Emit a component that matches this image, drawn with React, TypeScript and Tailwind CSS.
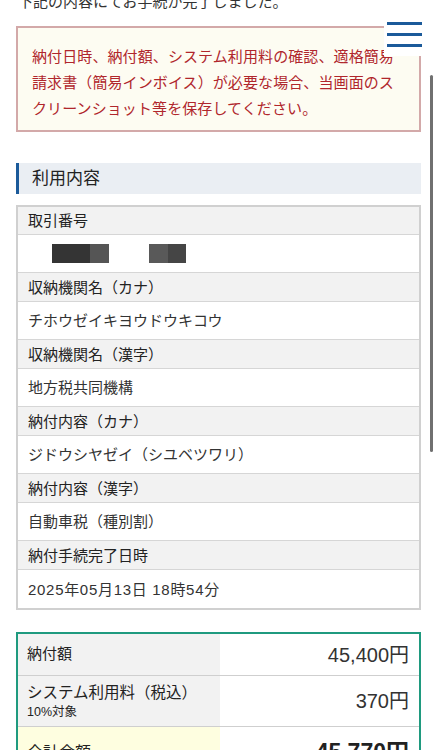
import React from "react";

const font = { fontFamily: '"Liberation Sans", "Noto Sans CJK JP", sans-serif' };

function HeaderRow({ children, first }: { children: React.ReactNode; first?: boolean }) {
  return (
    <div
      className={
        first
          ? "h-[28px] flex items-center px-[10px] bg-[#f2f2f2] text-[15px] text-[#222] leading-none"
          : "h-[29px] flex items-center px-[10px] bg-[#f2f2f2] text-[15px] text-[#222] leading-none"
      }
    >
      {children}
    </div>
  );
}

function ValueRow({ children }: { children: React.ReactNode }) {
  return (
    <div className="h-[38px] flex items-center px-[10px] bg-white text-[15px] text-[#333] leading-none">
      {children}
    </div>
  );
}

export default function App() {
  const rows: [string, React.ReactNode][] = [
    [
      "取引番号",
      <div className="flex items-center h-[19px] ml-[24px]">
        <div className="w-[38px] h-[19px] bg-[#343434]" />
        <div className="w-[19px] h-[19px] bg-[#555]" />
        <div className="w-[40px]" />
        <div className="w-[19px] h-[19px] bg-[#595959]" />
        <div className="w-[18px] h-[19px] bg-[#454545]" />
      </div>,
    ],
    ["収納機関名（カナ）", "チホウゼイキヨウドウキコウ"],
    ["収納機関名（漢字）", "地方税共同機構"],
    ["納付内容（カナ）", "ジドウシヤゼイ（シユベツワリ）"],
    ["納付内容（漢字）", "自動車税（種別割）"],
    ["納付手続完了日時", <span className="tracking-[0.7px]">2025年05月13日 18時54分</span>],
  ];

  return (
    <div className="relative w-[437px] h-[750px] overflow-hidden bg-white" style={font}>
      <div className="px-[16px]">
        <p className="mt-[-8px] ml-[2px] text-[15px] leading-[20px] text-[#333]">
          下記の内容にてお手続が完了しました。
        </p>

        <div className="mt-[14px] border-2 border-[#d3a9a9] bg-[#fdfcf2] pt-[16px] pb-[8px] pl-[14px] pr-[14px]">
          <p className="text-[15px] leading-[26px] text-[#b0262c] tracking-[0.1px]">
            納付日時、納付額、システム利用料の確認、適格簡易請求書（簡易インボイス）が必要な場合、当画面のスクリーンショット等を保存してください。
          </p>
        </div>

        <div className="mt-[31px] h-[31px] flex items-center bg-[#eaeef3] border-l-[3px] border-[#1b5a9a] pl-[13px]">
          <span className="text-[17px] text-[#222] leading-none">利用内容</span>
        </div>

        <div className="mt-[11px] border-2 border-[#d0d0d0] flex flex-col divide-y divide-[#d6d6d6]">
          {rows.map(([h, v], i) => (
            <React.Fragment key={i}>
              <HeaderRow first={i === 0}>{h}</HeaderRow>
              <ValueRow>{v}</ValueRow>
            </React.Fragment>
          ))}
        </div>

        <div className="mt-[22px] border-2 border-[#1f9a7f] flex flex-col divide-y divide-[#cfcfcf]">
          <div className="flex h-[42px]">
            <div className="w-[202px] bg-[#f2f2f2] flex items-center px-[9px] text-[15px] text-[#222]">
              納付額
            </div>
            <div className="flex-1 bg-white flex items-center justify-end pr-[10px] text-[20px] text-[#333]">
              45,400円
            </div>
          </div>
          <div className="flex h-[51px]">
            <div className="w-[202px] bg-[#f2f2f2] flex flex-col justify-center px-[9px]">
              <span className="text-[15.5px] leading-[20px] text-[#222]">システム利用料（税込）</span>
              <span className="text-[12.5px] leading-[15px] text-[#222] mt-[2px]">10%対象</span>
            </div>
            <div className="flex-1 bg-white flex items-center justify-end pr-[10px] text-[20px] text-[#333]">
              370円
            </div>
          </div>
          <div className="flex h-[51px]">
            <div className="w-[202px] bg-[#fefee0] flex items-center px-[9px] text-[16px] text-[#222]">
              合計金額
            </div>
            <div className="flex-1 bg-white flex items-center justify-end pr-[10px] text-[23px] font-bold text-[#222]">
              45,770円
            </div>
          </div>
        </div>
      </div>

      {/* hamburger overlay */}
      <div className="absolute left-[384px] top-[12px] w-[40px] h-[44px] bg-white flex flex-col justify-between pl-[3px] pr-[2px] pt-[10px] pb-[9px]">
        <div className="h-[3px] bg-[#1b5a9a]" />
        <div className="h-[3px] bg-[#1b5a9a]" />
        <div className="h-[3px] bg-[#1b5a9a]" />
      </div>

      {/* scroll indicator */}
      <div className="absolute left-[430px] top-[75px] w-[3px] h-[377px] rounded-full bg-[#707070]" />
    </div>
  );
}
